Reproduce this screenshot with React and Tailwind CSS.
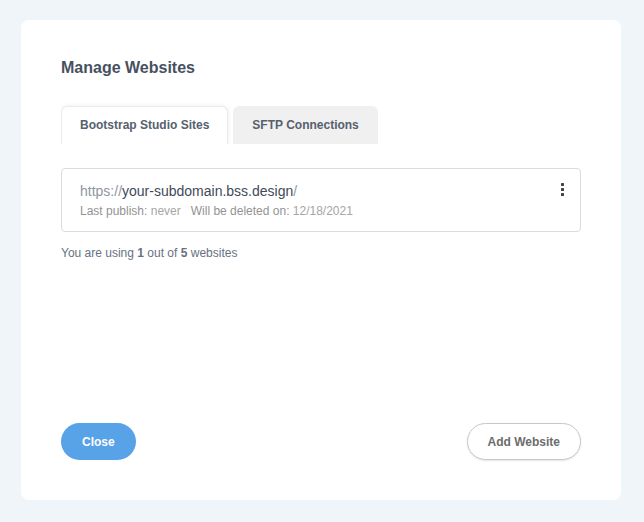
import { useState } from 'react';
import clsx from 'clsx';

const tabs = [
  { id: 'sites', label: 'Bootstrap Studio Sites' },
  { id: 'sftp', label: 'SFTP Connections' },
];

const sites = [
  { subdomain: 'your-subdomain.bss.design', lastPublish: 'never', deletedOn: '12/18/2021' },
];

const MAX_SITES = 5;

function DotsIcon() {
  return (
    <svg width="3" height="13" viewBox="0 0 3 13" fill="#444" aria-hidden="true">
      <rect width="3" height="3" rx="0.5" />
      <rect y="5" width="3" height="3" rx="0.5" />
      <rect y="10" width="3" height="3" rx="0.5" />
    </svg>
  );
}

function TabBar({ activeTab, onTabChange }) {
  return (
    <div role="tablist" className="flex gap-[5px] overflow-hidden pt-2 -mt-2">
      {tabs.map((tab) => (
        <button
          key={tab.id}
          type="button"
          role="tab"
          aria-selected={activeTab === tab.id}
          onClick={() => onTabChange(tab.id)}
          className={clsx(
            'h-[38px] rounded-t-md border border-b-0 px-[18px] pb-0.5 text-xs font-bold text-[#56606e]',
            activeTab === tab.id
              ? 'border-[#ebebeb] bg-white shadow-[0_0_5px_rgba(0,0,0,0.08)]'
              : 'border-[#f0f0f0] bg-[#f0f0f0]'
          )}
        >
          {tab.label}
        </button>
      ))}
    </div>
  );
}

function SiteCard({ site }) {
  return (
    <li className="flex items-start justify-between rounded border border-[#dcdcdc] pt-3 pr-4 pb-2.5 pl-[18px]">
      <div>
        <a href={`https://${site.subdomain}/`} className="block text-sm leading-5 text-[#8f969f]">
          https://<span className="text-[#3f4a59]">{site.subdomain}</span>/
        </a>
        <p className="flex flex-wrap gap-x-2.5 text-xs leading-5 text-[#939393]">
          <span>
            Last publish: <span className="text-[#a6a6a6]">{site.lastPublish}</span>
          </span>
          <span>
            Will be deleted on: <span className="text-[#a6a6a6]">{site.deletedOn}</span>
          </span>
        </p>
      </div>
      <button type="button" aria-label="Website options" className="pt-0.5">
        <DotsIcon />
      </button>
    </li>
  );
}

export default function App() {
  const [activeTab, setActiveTab] = useState('sites');

  return (
    <div className="flex min-h-screen flex-col bg-[#f0f5f9] pt-5 pr-[23px] pb-[22px] pl-[21px] font-['Liberation_Sans',Arial,sans-serif]">
      <main className="flex flex-1 flex-col rounded-lg bg-white p-10">
        <h1 className="mb-[26px] -mt-1 text-base leading-6 font-bold text-[#465160]">Manage Websites</h1>

        <TabBar activeTab={activeTab} onTabChange={setActiveTab} />

        {activeTab === 'sites' && (
          <section className="mt-6">
            <ul>
              {sites.map((site) => (
                <SiteCard key={site.subdomain} site={site} />
              ))}
            </ul>
            <p className="mt-[11px] text-xs leading-5 text-[#66727f]">
              You are using <b>{sites.length}</b> out of <b>{MAX_SITES}</b> websites
            </p>
          </section>
        )}

        {/* Footer */}
        <div className="mt-auto flex justify-between">
          <button
            type="button"
            className="h-[37px] rounded-full bg-[#58a2e8] px-[21px] text-xs font-bold text-white"
          >
            Close
          </button>
          <button
            type="button"
            className="h-[37px] rounded-full border border-[#c8c8c8] bg-white px-5 text-xs font-bold text-[#6c6c6c] shadow-[0_1px_2px_rgba(0,0,0,0.1)]"
          >
            Add Website
          </button>
        </div>
      </main>
    </div>
  );
}
